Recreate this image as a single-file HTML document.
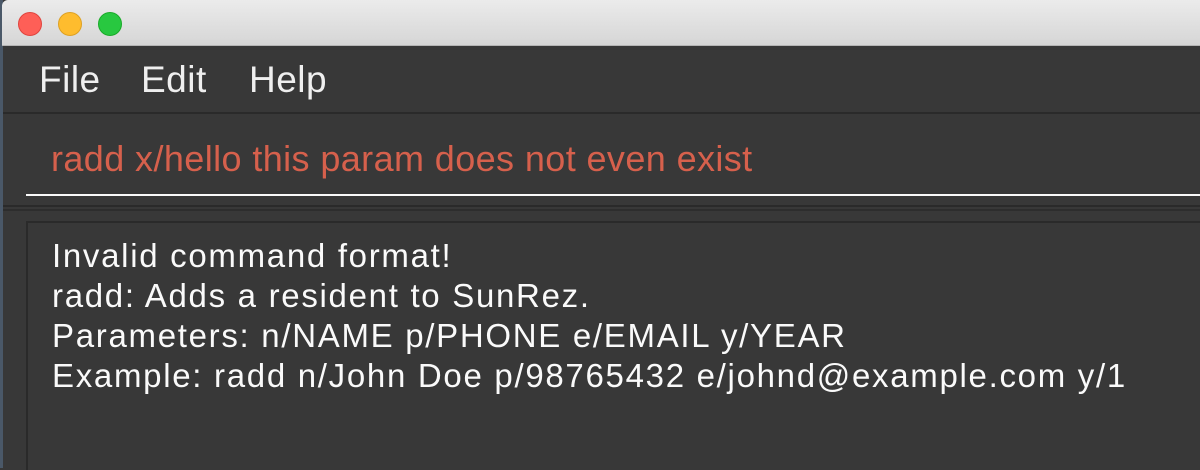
<!DOCTYPE html>
<html><head><style>
body{margin:0;width:1200px;height:468px;overflow:hidden;background:#383838;font-family:"Liberation Sans",sans-serif;position:relative}
.edge{position:absolute;left:0;top:0;width:3px;height:468px;background:#4a5868}
.title{position:absolute;left:2px;top:0;width:1198px;height:45px;background:linear-gradient(#ebebeb,#d6d6d6);border-bottom:1px solid #b5b5b5;border-top-left-radius:6px}
.dot{position:absolute;top:12px;width:22px;height:22px;border-radius:50%}
.menu{position:absolute;left:3px;top:46px;width:1197px;height:66px;background:#383838;border-bottom:2px solid #2a2a2a}
.menu span{position:absolute;top:15px;font-size:37px;line-height:1;letter-spacing:0.5px;color:#efefef}
.cmd{position:absolute;left:3px;top:114px;width:1197px;height:91px;background:#383838;border-bottom:2px solid #2a2a2a}
.cmd .t{position:absolute;left:48px;top:27px;font-size:36px;line-height:1;letter-spacing:0.4px;color:#d6604c;white-space:nowrap}
.cmd .u{position:absolute;left:23px;top:80px;right:0;height:2px;background:#fafafa}
.l2{position:absolute;left:3px;top:209px;width:1197px;height:2px;background:#2d2d2d}
.res{position:absolute;left:26px;top:221px;width:1174px;height:247px;border-top:2px solid #2a2a2a;border-left:2px solid #2a2a2a}
.res div{position:absolute;left:24px;top:13px;font-size:33px;line-height:40px;letter-spacing:1.7px;color:#fafafa;white-space:pre}
</style></head><body>
<div class="edge"></div>
<div class="title">
<div class="dot" style="left:16px;background:#fe5f57;border:1px solid #e0443e;"></div>
<div class="dot" style="left:56px;background:#febc2e;border:1px solid #dea123;"></div>
<div class="dot" style="left:96px;background:#28c840;border:1px solid #1aab29;"></div>
</div>
<div class="menu"><span style="left:36px">File</span><span style="left:138px">Edit</span><span style="left:246px">Help</span></div>
<div class="cmd"><div class="t">radd x/hello this param does not even exist</div><div class="u"></div></div>
<div class="l2"></div>
<div class="res"><div>Invalid command format!
radd: Adds a resident to SunRez.
Parameters: n/NAME p/PHONE e/EMAIL y/YEAR
Example: radd n/John Doe p/98765432 e/johnd@example.com y/1</div></div>
</body></html>
